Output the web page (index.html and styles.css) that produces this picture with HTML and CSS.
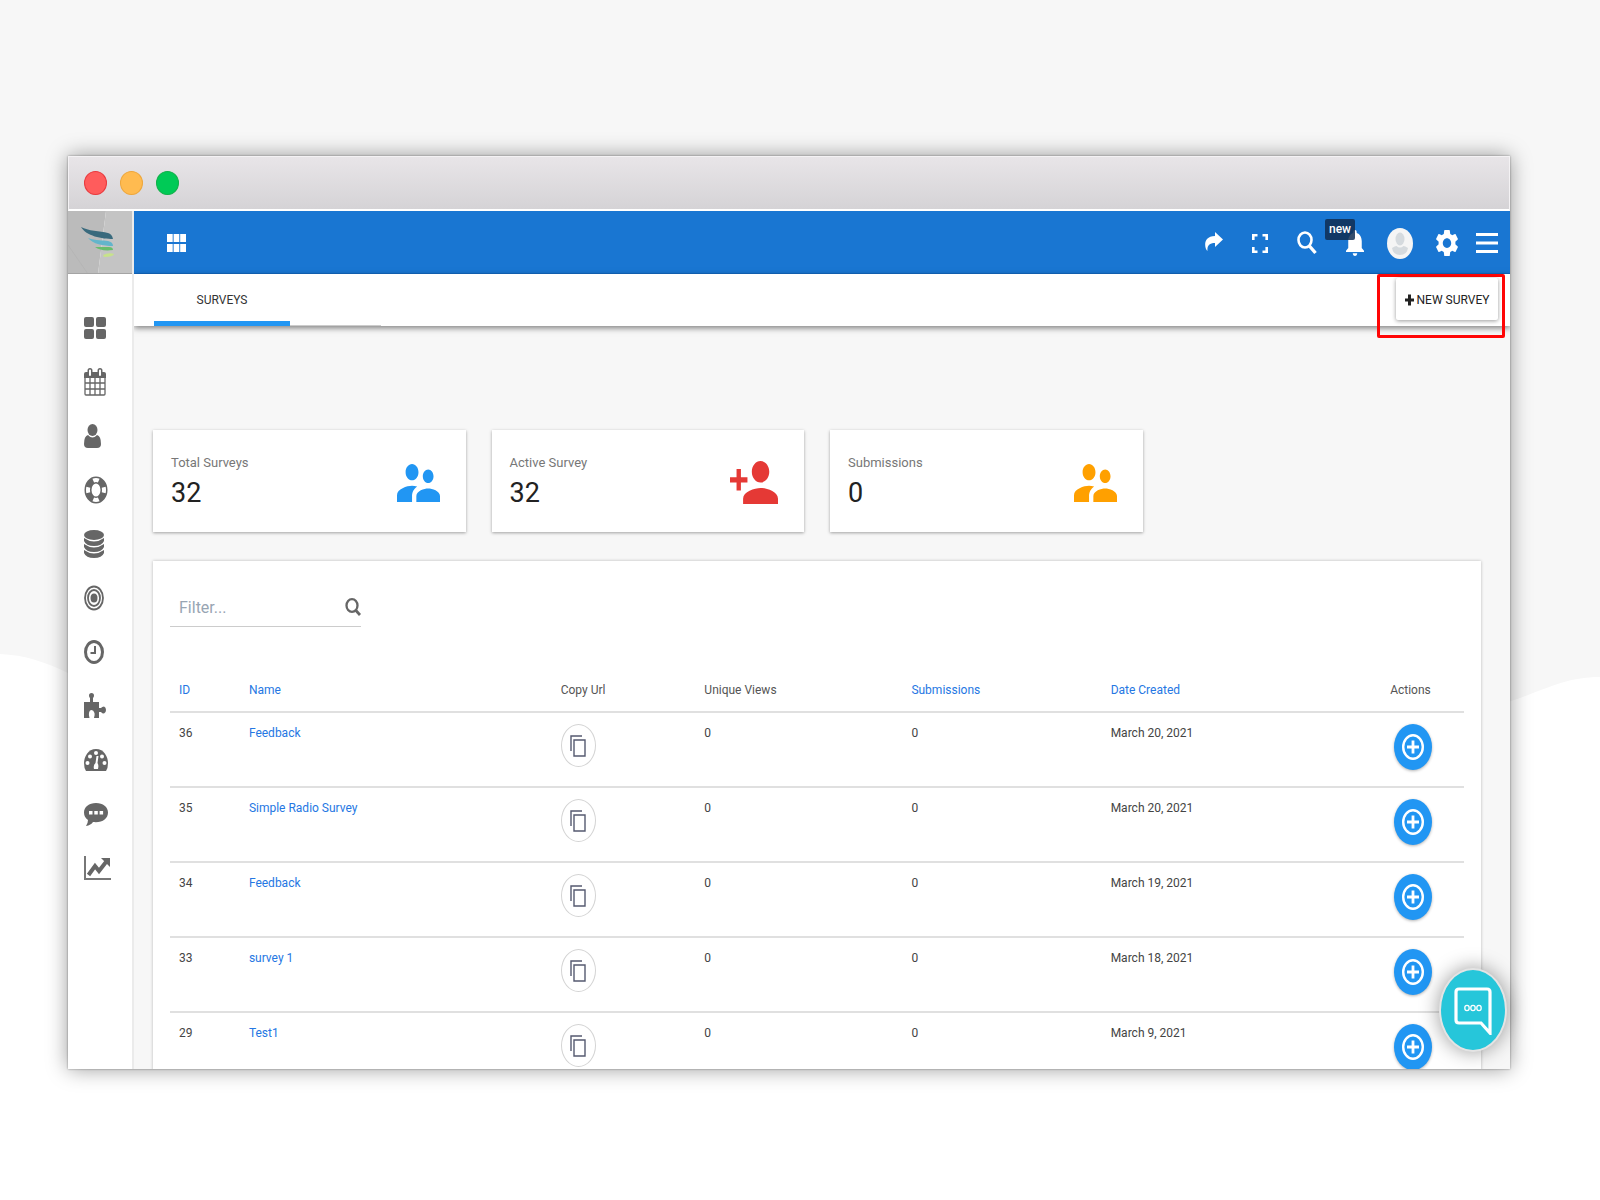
FILE: index.html
```html
<!DOCTYPE html>
<html lang="en">
<head>
<meta charset="utf-8">
<title>Surveys</title>
<link rel="stylesheet" href="styles.css">
</head>
<body>
<svg class="backdrop" viewBox="0 0 1600 1200" preserveAspectRatio="none" aria-hidden="true">
  <path fill="#f7f7f7" d="M0 0H1600V677C1565 677 1545 690 1511 701L800 860L68 673C45 662 25 655 0 654Z"/>
</svg>
<svg class="sprite" aria-hidden="true">
  <symbol id="copy" viewBox="0 0 16 22" preserveAspectRatio="none"><path d="M1 16V1H12M4 5H15V21H4Z" fill="none" stroke="#555a70" stroke-width="1.4"/></symbol>
  <symbol id="plus" viewBox="0 0 22 26" preserveAspectRatio="none"><ellipse cx="11" cy="13" rx="9.8" ry="11.8" fill="none" stroke="#fff" stroke-width="2.4"/><path d="M11 6.500V19.500M5 13H17" stroke="#fff" stroke-width="2.800"/></symbol>
  <symbol id="people" viewBox="2 5 20 14" preserveAspectRatio="none"><path fill="currentColor" d="M16.5 12c1.38 0 2.490-1.120 2.490-2.500S17.880 7 16.500 7C15.120 7 14 8.120 14 9.500s1.120 2.500 2.500 2.500zM9 11c1.660 0 2.990-1.340 2.990-3S10.660 5 9 5C7.340 5 6 6.340 6 8s1.340 3 3 3zm7.500 3c-1.830 0-5.500.92-5.500 2.750V19h11v-2.250c0-1.830-3.670-2.750-5.500-2.750zM9 13c-2.330 0-7 1.170-7 3.500V19h7v-2.250c0-.85.33-2.340 2.370-3.470C10.500 13.100 9.660 13 9 13z"/></symbol>
</svg>

<div class="window">
  <div class="titlebar"><span class="dot dot-red"></span><span class="dot dot-amber"></span><span class="dot dot-green"></span></div>
  <div class="app">
    <aside class="sidebar">
      <a class="logo" href="#" aria-label="Home">
        <svg width="65" height="63" viewBox="0 0 65 63">
          <path fill="#bbb" d="M0 0H38L30 63H0Z"/><path fill="#c4c4c4" d="M38 0H65V63H30Z"/>
          <path d="M0 34L20 63" stroke="#b5b5b5" fill="none"/>
          <path fill="#396a7d" d="M13 16C20 20 32 20 40 22Q44 23 45 28C34 28 18 25 13 16Z"/>
          <path fill="#63b5cb" d="M20 27C28 30 35 29 40 30Q45 31 45 35C35 35 25 33 20 27Z"/>
          <path fill="#68bd6c" d="M27 36H41Q45 36 45 39C37 40 31 39 27 36Z"/>
          <path fill="#c7e38a" d="M35 44Q41 41 46 43Q45 46 36 46Z"/>
          <path d="M0 62.500H65" stroke="#a4a4a4"/>
        </svg>
      </a>
      <nav class="side-nav" aria-label="Main">
        <a href="#" aria-label="Dashboard"><svg width="22" height="24" viewBox="0 0 22 24"><g fill="#666"><rect x="0" y="1" width="10" height="10" rx="2"/><rect x="12" y="1" width="10" height="10" rx="2"/><rect x="0" y="13" width="10" height="10" rx="2"/><rect x="12" y="13" width="10" height="10" rx="2"/></g></svg></a>
        <a href="#" aria-label="Calendar"><svg width="22" height="28" viewBox="0 0 22 28"><path d="M1 10V26Q1 27 2 27H20Q21 27 21 26V10M1 15H21M1 21H21M6 9V27M11 9V27M16 9V27" fill="none" stroke="#666" stroke-width="1.300"/><path fill="#666" d="M0 6Q0 4 2 4H20Q22 4 22 6V10H0Z"/><path d="M6 7V2.500M16 7V2.500" stroke="#666" stroke-width="5" stroke-linecap="round"/><path d="M6 7V2.500M16 7V2.500" stroke="#fff" stroke-width="2" stroke-linecap="round"/></svg></a>
        <a href="#" aria-label="Contacts"><svg width="17" height="24" viewBox="0 0 17 24"><ellipse cx="8.500" cy="6" rx="5" ry="6" fill="#666"/><path fill="#666" d="M4 11Q8.500 16 13 11Q17 12 17 20Q17 24 13 24H4Q0 24 0 20Q0 12 4 11Z"/></svg></a>
        <a href="#" aria-label="Support"><svg width="24" height="28" viewBox="0 0 24 28"><ellipse cx="12" cy="14" rx="8" ry="10" fill="none" stroke="#666" stroke-width="7"/><ellipse cx="12" cy="14" rx="8" ry="10" fill="none" stroke="#fff" stroke-width="4" pathLength="100" stroke-dasharray="10 15" stroke-dashoffset="5"/></svg></a>
        <a href="#" aria-label="Data"><svg width="20" height="28" viewBox="0 0 20 28"><g fill="#666"><ellipse cx="10" cy="5" rx="10" ry="5"/><path d="M0 8Q10 15 20 8V11Q18 16 10 16T0 11Z"/><path d="M0 14Q10 21 20 14V17Q18 22 10 22T0 17Z"/><path d="M0 20Q10 27 20 20V23Q18 28 10 28T0 23Z"/></g></svg></a>
        <a href="#" aria-label="Targets"><svg width="20" height="26" viewBox="0 0 20 26"><g fill="none" stroke="#666" stroke-width="1.800"><ellipse cx="10" cy="13" rx="9" ry="11.500"/><ellipse cx="10" cy="13" rx="6" ry="8"/></g><ellipse cx="10" cy="13" rx="3.500" ry="4.500" fill="#666"/></svg></a>
        <a href="#" aria-label="Time"><svg width="20" height="24" viewBox="0 0 20 24"><ellipse cx="10" cy="12" rx="8.500" ry="10.500" fill="none" stroke="#666" stroke-width="3"/><path d="M11 6V13H6.500" fill="none" stroke="#666" stroke-width="2"/></svg></a>
        <a href="#" aria-label="Plugins"><svg width="22" height="26" viewBox="0 0 22 26"><path fill="#666" d="M0 9H6V5Q5 4 5 2.500Q5 0 7.500 0T10 2.500Q10 4 9 5V9H15V15H17Q18 13.500 20 13.500Q22 14 22 17Q22 20 20 20.500Q18 20.500 17 19H15V25H10Q11 22 10.500 20Q9.500 17 7.500 17T5 20Q4.500 22 5.500 25H0Z"/></svg></a>
        <a href="#" aria-label="Performance"><svg width="24" height="24" viewBox="0 0 24 24"><path fill="#666" d="M12 1C4 1 0 9 0 15Q0 20 2 23H22Q24 20 24 15C24 9 20 1 12 1Z"/><g fill="#fff"><circle cx="12" cy="5" r="2"/><circle cx="6" cy="8.500" r="2"/><circle cx="18" cy="8.500" r="2"/><circle cx="3.500" cy="15" r="2"/><circle cx="20.500" cy="15" r="2"/><path d="M12.500 8H14.500L13.500 15Q15 17 14 21H10Q9 17 11.500 15Z"/></g></svg></a>
        <a href="#" aria-label="Messages"><svg width="24" height="24" viewBox="0 0 24 24"><path fill="#666" d="M12 1C5 1 0 5 0 10.500Q0 15 4 18Q4 21 2 24Q7 23 9 20C18 21 24 17 24 10.500C24 5 19 1 12 1Z"/><path fill="#fff" d="M5 9H8.500V12.500H5ZM10.300 9H13.800V12.500H10.300ZM15.600 9H19.100V12.500H15.600Z"/></svg></a>
        <a href="#" aria-label="Reports"><svg width="27" height="26" viewBox="0 0 27 26"><path d="M1 1V24H27" fill="none" stroke="#777" stroke-width="2"/><path d="M4.500 20L11 11L15 16L22 7" fill="none" stroke="#666" stroke-width="4"/><path fill="#666" d="M17 3H26V12Z"/></svg></a>
      </nav>
    </aside>
    <div class="main">
      <header class="topbar">
        <button class="icon-button" aria-label="Apps"><svg width="19" height="18" viewBox="0 0 19 18"><path fill="#fff" d="M0 0H5.700V8H0ZM6.600 0H12.300V8H6.600ZM13.200 0H19V8H13.200ZM0 10H5.700V18H0ZM6.600 10H12.300V18H6.600ZM13.200 10H19V18H13.200Z"/></svg></button>
        <div class="tools">
          <div class="tool-group">
            <button class="icon-button" aria-label="Share"><svg width="19" height="24" viewBox="0 0 19 24"><path fill="#fff" d="M11 1L19 8.500L11 16V12C5 12 3 15 3.500 20C0 17-1 5 11 5Z"/></svg></button>
            <button class="icon-button" aria-label="Full screen"><svg width="16" height="19" viewBox="0 0 16 19"><path fill="none" stroke="#fff" stroke-width="2.600" d="M1.300 6V1.300H5.500M10.500 1.300H14.700V6M14.700 13V17.700H10.500M5.500 17.700H1.300V13"/></svg></button>
            <button class="icon-button" aria-label="Search"><svg width="20" height="24" viewBox="0 0 20 24"><ellipse cx="8" cy="9" rx="6.500" ry="7.500" fill="none" stroke="#fff" stroke-width="2.600"/><path d="M12 14.500L18.500 22" stroke="#fff" stroke-width="3.400"/></svg></button>
            <button class="icon-button bell" aria-label="Notifications"><svg width="18" height="26" viewBox="4 2.500 16 19.500" preserveAspectRatio="none"><path fill="#fff" d="M12 22c1.100 0 2-.9 2-2h-4c0 1.100.89 2 2 2zm6-6v-5c0-3.070-1.640-5.640-4.500-6.320V4c0-.83-.67-1.500-1.500-1.500s-1.500.67-1.500 1.500v.68C7.630 5.360 6 7.920 6 11v5l-2 2v1h16v-1l-2-2z"/></svg><span class="badge">new</span></button>
          </div>
          <button class="icon-button" aria-label="Account"><svg width="26" height="31" viewBox="0 0 26 31"><ellipse cx="13" cy="15.500" rx="13" ry="15.500" fill="#f5f5f5"/><ellipse cx="13" cy="11" rx="4.500" ry="6.500" fill="#d5dade"/><path fill="#d5dade" d="M5 20Q8 18 9.500 18Q13 21 16.500 18Q18 18 21 20Q20 27 13 27T5 20Z"/></svg></button>
          <div class="tool-group tool-group-tight">
            <button class="icon-button" aria-label="Settings"><svg width="22" height="26" viewBox="2.600 2.400 18.800 19.200" preserveAspectRatio="none"><path fill="#fff" d="M19.140 12.940c.04-.3.06-.61.06-.94 0-.32-.02-.64-.07-.94l2.030-1.580c.18-.14.23-.41.12-.61l-1.920-3.320c-.12-.22-.37-.29-.59-.22l-2.390.96c-.5-.38-1.030-.7-1.620-.94l-.36-2.540c-.04-.24-.24-.41-.48-.41h-3.840c-.24 0-.43.17-.47.41l-.36 2.540c-.59.24-1.130.57-1.620.94l-2.390-.96c-.22-.08-.47 0-.59.22L2.740 8.870c-.12.21-.08.47.12.61l2.030 1.580c-.05.3-.09.63-.09.94s.02.64.07.94l-2.030 1.580c-.18.14-.23.41-.12.61l1.920 3.320c.12.22.37.29.59.22l2.390-.96c.5.38 1.030.7 1.620.94l.36 2.540c.05.24.24.41.48.41h3.840c.24 0 .44-.17.47-.41l.36-2.540c.59-.24 1.130-.56 1.620-.94l2.390.96c.22.08.47 0 .59-.22l1.920-3.320c.12-.22.07-.47-.12-.61l-2.010-1.580zM12 15.600c-1.980 0-3.600-1.620-3.600-3.600s1.620-3.600 3.600-3.600 3.600 1.620 3.600 3.600-1.620 3.600-3.600 3.600z"/></svg></button>
            <button class="icon-button" aria-label="Menu"><svg width="22" height="20" viewBox="0 0 22 20"><path stroke="#fff" stroke-width="3" d="M0 1.500H22M0 10H22M0 18.500H22"/></svg></button>
          </div>
        </div>
      </header>
      <div class="tabbar">
        <a class="tab" href="#">SURVEYS</a>
        <span class="tab-track"></span>
        <div class="highlight"><button class="new-button"><svg width="9" height="12" viewBox="0 0 9 12"><path d="M4.500 0.500V11.500M0 6H9" stroke="#222" stroke-width="3"/></svg>NEW SURVEY</button></div>
      </div>
      <main class="content">
        <section class="stats">
          <div class="stat"><div><p class="stat-label">Total Surveys</p><p class="stat-value">32</p></div><svg class="blue" width="43" height="38"><use href="#people"/></svg></div>
          <div class="stat"><div><p class="stat-label">Active Survey</p><p class="stat-value">32</p></div><svg width="48" height="43" viewBox="1 4 22 16" preserveAspectRatio="none"><path fill="#e53935" d="M15 12c2.210 0 4-1.790 4-4s-1.790-4-4-4-4 1.790-4 4 1.790 4 4 4zm-9-2V7H4v3H1v2h3v3h2v-3h3v-2H6zm9 4c-2.670 0-8 1.340-8 4v2h16v-2c0-2.660-5.330-4-8-4z"/></svg></div>
          <div class="stat"><div><p class="stat-label">Submissions</p><p class="stat-value">0</p></div><svg class="orange" width="43" height="38"><use href="#people"/></svg></div>
        </section>
        <section class="panel">
          <div class="filter">
            <input type="text" placeholder="Filter..." aria-label="Filter">
            <svg width="16" height="18" viewBox="0 0 16 18"><ellipse cx="7" cy="7.500" rx="5.500" ry="6.300" fill="none" stroke="#666" stroke-width="2.300"/><path d="M10.500 12L15 17" stroke="#666" stroke-width="2.800"/></svg>
          </div>
          <table>
            <colgroup><col class="c-id"><col class="c-name"><col class="c-copy"><col class="c-views"><col class="c-subs"><col class="c-date"><col class="c-act"></colgroup>
            <thead><tr><th><a href="#">ID</a></th><th><a href="#">Name</a></th><th>Copy Url</th><th>Unique Views</th><th><a href="#">Submissions</a></th><th><a href="#">Date Created</a></th><th>Actions</th></tr></thead>
            <tbody>
              <tr><td>36</td><td><a href="#">Feedback</a></td><td><button class="copy" aria-label="Copy"><svg width="16" height="22"><use href="#copy"/></svg></button></td><td>0</td><td>0</td><td>March 20, 2021</td><td><button class="action" aria-label="Actions"><svg width="22" height="26"><use href="#plus"/></svg></button></td></tr>
              <tr><td>35</td><td><a href="#">Simple Radio Survey</a></td><td><button class="copy" aria-label="Copy"><svg width="16" height="22"><use href="#copy"/></svg></button></td><td>0</td><td>0</td><td>March 20, 2021</td><td><button class="action" aria-label="Actions"><svg width="22" height="26"><use href="#plus"/></svg></button></td></tr>
              <tr><td>34</td><td><a href="#">Feedback</a></td><td><button class="copy" aria-label="Copy"><svg width="16" height="22"><use href="#copy"/></svg></button></td><td>0</td><td>0</td><td>March 19, 2021</td><td><button class="action" aria-label="Actions"><svg width="22" height="26"><use href="#plus"/></svg></button></td></tr>
              <tr><td>33</td><td><a href="#">survey 1</a></td><td><button class="copy" aria-label="Copy"><svg width="16" height="22"><use href="#copy"/></svg></button></td><td>0</td><td>0</td><td>March 18, 2021</td><td><button class="action" aria-label="Actions"><svg width="22" height="26"><use href="#plus"/></svg></button></td></tr>
              <tr><td>29</td><td><a href="#">Test1</a></td><td><button class="copy" aria-label="Copy"><svg width="16" height="22"><use href="#copy"/></svg></button></td><td>0</td><td>0</td><td>March 9, 2021</td><td><button class="action" aria-label="Actions"><svg width="22" height="26"><use href="#plus"/></svg></button></td></tr>
            </tbody>
          </table>
        </section>
      </main>
    </div>
  </div>
  <button class="chat" aria-label="Chat"><svg width="38" height="50" viewBox="0 0 38 50"><path d="M5 4H33Q36 4 36 7V48L27 38H5Q2 38 2 35V7Q2 4 5 4Z" fill="none" stroke="#fff" stroke-width="3.200"/><g fill="none" stroke="#fff" stroke-width="1.300"><ellipse cx="13" cy="23" rx="2.200" ry="2.600"/><ellipse cx="19" cy="23" rx="2.200" ry="2.600"/><ellipse cx="25" cy="23" rx="2.200" ry="2.600"/></g></svg></button>
</div>
</body>
</html>
```
FILE: styles.css
```css
* { box-sizing: border-box; }

body {
  margin: 0;
  height: 100vh;
  padding: 156px 90px 131px 68px;
  display: flex;
  background: #fff;
  color: #444;
  font: 12px/18px Roboto, "Liberation Sans", sans-serif;
}

a { color: #2577e3; text-decoration: none; }
p { margin: 0; }
svg { display: block; }
button {
  border: 0;
  padding: 0;
  background: none;
  font: inherit;
  color: inherit;
}

.backdrop {
  position: absolute;
  inset: 0;
  width: 100%;
  height: 100%;
  z-index: -1;
}
.sprite { position: absolute; width: 0; height: 0; }

.window {
  position: relative;
  flex: 1;
  min-width: 0;
  display: flex;
  flex-direction: column;
  box-shadow: 0 0 20px rgba(0, 0, 0, .4), 0 0 2px rgba(0, 0, 0, .4);
}

.titlebar {
  flex: none;
  height: 55px;
  padding: 0 15px;
  display: flex;
  align-items: center;
  gap: 13px;
  border: 1px solid #f4f2f4;
  border-bottom: 2px solid #fff;
  background: linear-gradient(#e8e5e8, #d5d3d6);
}
.dot { width: 23px; height: 24px; border-radius: 50%; border: 1px solid; }
.dot-red { background: #ff5c5c; border-color: #e83a3e; }
.dot-amber { background: #ffbb50; border-color: #eea73c; }
.dot-green { background: #00ca56; border-color: #12b04a; }

.app { flex: 1; min-height: 0; display: flex; overflow: hidden; background: #f7f7f7; }

.sidebar {
  position: relative;
  z-index: 1;
  flex: none;
  width: 66px;
  background: #fff;
  border-right: 2px solid #ebebeb;
}
.logo { display: block; height: 63px; overflow: hidden; }
.side-nav { padding: 27px 0 0 16px; }
.side-nav a { display: flex; align-items: center; height: 54px; }

.main { flex: 1; min-width: 0; display: flex; flex-direction: column; }

.topbar {
  flex: none;
  height: 63px;
  padding: 2px 12px 0 33px;
  display: flex;
  align-items: center;
  justify-content: space-between;
  background: #1976d2;
  border-bottom: 1px solid #1268c2;
}
.tools { display: flex; align-items: center; gap: 23px; }
.tool-group { display: flex; align-items: center; gap: 29px; }
.tool-group-tight { gap: 18px; }
.bell { position: relative; }
.badge {
  position: absolute;
  right: 9px;
  bottom: 16px;
  height: 21px;
  padding: 0 4px;
  border-radius: 2px;
  background: rgba(16, 46, 82, .85);
  color: #fff;
  font-size: 12px;
  font-weight: 500;
  line-height: 20px;
}

.tabbar {
  position: relative;
  flex: none;
  height: 52px;
  padding: 0 5px 0 20px;
  display: flex;
  background: #fff;
  box-shadow: 0 2px 6px rgba(0, 0, 0, .5);
}
.tab {
  width: 136px;
  height: 52px;
  border-bottom: 5px solid #2196f3;
  color: #333;
  line-height: 53px;
  text-align: center;
}
.tab-track { width: 91px; border-bottom: 1px solid #ccc; }
.highlight {
  margin-left: auto;
  width: 128px;
  height: 64px;
  padding: 1px 3px 0 16px;
  border: 3px solid #ff0505;
  border-radius: 2px;
}
.new-button {
  width: 102px;
  height: 42px;
  padding-top: 2px;
  display: flex;
  align-items: center;
  justify-content: center;
  gap: 3px;
  background: #fff;
  border-radius: 2px;
  box-shadow: 0 1px 4px rgba(0, 0, 0, .4);
  color: #222;
}

.content { flex: 1; min-height: 0; padding: 104px 29px 0 19px; }

.stats { display: grid; grid-template-columns: repeat(4, 1fr); gap: 26px; }
.stat {
  height: 102px;
  padding: 0 26px 0 18px;
  display: flex;
  align-items: center;
  justify-content: space-between;
  background: #fff;
  box-shadow: 0 1px 3px rgba(0, 0, 0, .35);
}
.stat svg { margin-top: 3px; }
.stat-label { color: #777; font-size: 13px; line-height: 24px; }
.stat-value { color: #222; font-size: 27px; line-height: 36px; }
.blue { color: #2196f3; }
.orange { color: #ffa000; }

.panel {
  min-height: 100%;
  margin-top: 29px;
  padding: 27px 17px;
  background: #fff;
  box-shadow: 0 0 3px rgba(0, 0, 0, .25);
}
.filter {
  width: 191px;
  height: 39px;
  margin-bottom: 42px;
  display: flex;
  align-items: center;
  border-bottom: 1px solid #ccc;
}
.filter input {
  flex: 1;
  min-width: 0;
  height: 36px;
  padding: 0 9px;
  border: 0;
  background: none;
  font: 16px/20px Roboto, "Liberation Sans", sans-serif;
}
.filter input::placeholder { color: #98a5b3; opacity: 1; }

table { width: 100%; border-collapse: separate; border-spacing: 0; table-layout: fixed; }
.c-id { width: 5.4%; }
.c-name { width: 24.1%; }
.c-copy { width: 11.1%; }
.c-views { width: 16%; }
.c-subs { width: 15.4%; }
.c-date { width: 21.6%; }
.c-act { width: 6.4%; }
th, td {
  padding: 0 0 0 9px;
  border-bottom: 2px solid #e0e0e0;
  text-align: left;
  vertical-align: top;
}
th { height: 44px; padding-top: 12px; font-weight: 400; color: #555; }
td { height: 75px; padding-top: 11px; }

.copy, .action { display: flex; align-items: center; justify-content: center; border-radius: 50%; }
.copy { width: 35px; height: 43px; border: 1px solid #d4d4d4; }
.action {
  width: 38px;
  height: 46px;
  margin-left: 4px;
  background: #2196f3;
  box-shadow: 0 1px 3px rgba(0, 0, 0, .3);
}

.chat {
  position: absolute;
  right: 3px;
  bottom: 17px;
  width: 68px;
  height: 84px;
  display: flex;
  align-items: center;
  justify-content: center;
  border: 2px solid #e4e4e4;
  border-radius: 50%;
  background: #26c6da;
  box-shadow: 0 0 20px rgba(0, 0, 0, .4);
}
```
